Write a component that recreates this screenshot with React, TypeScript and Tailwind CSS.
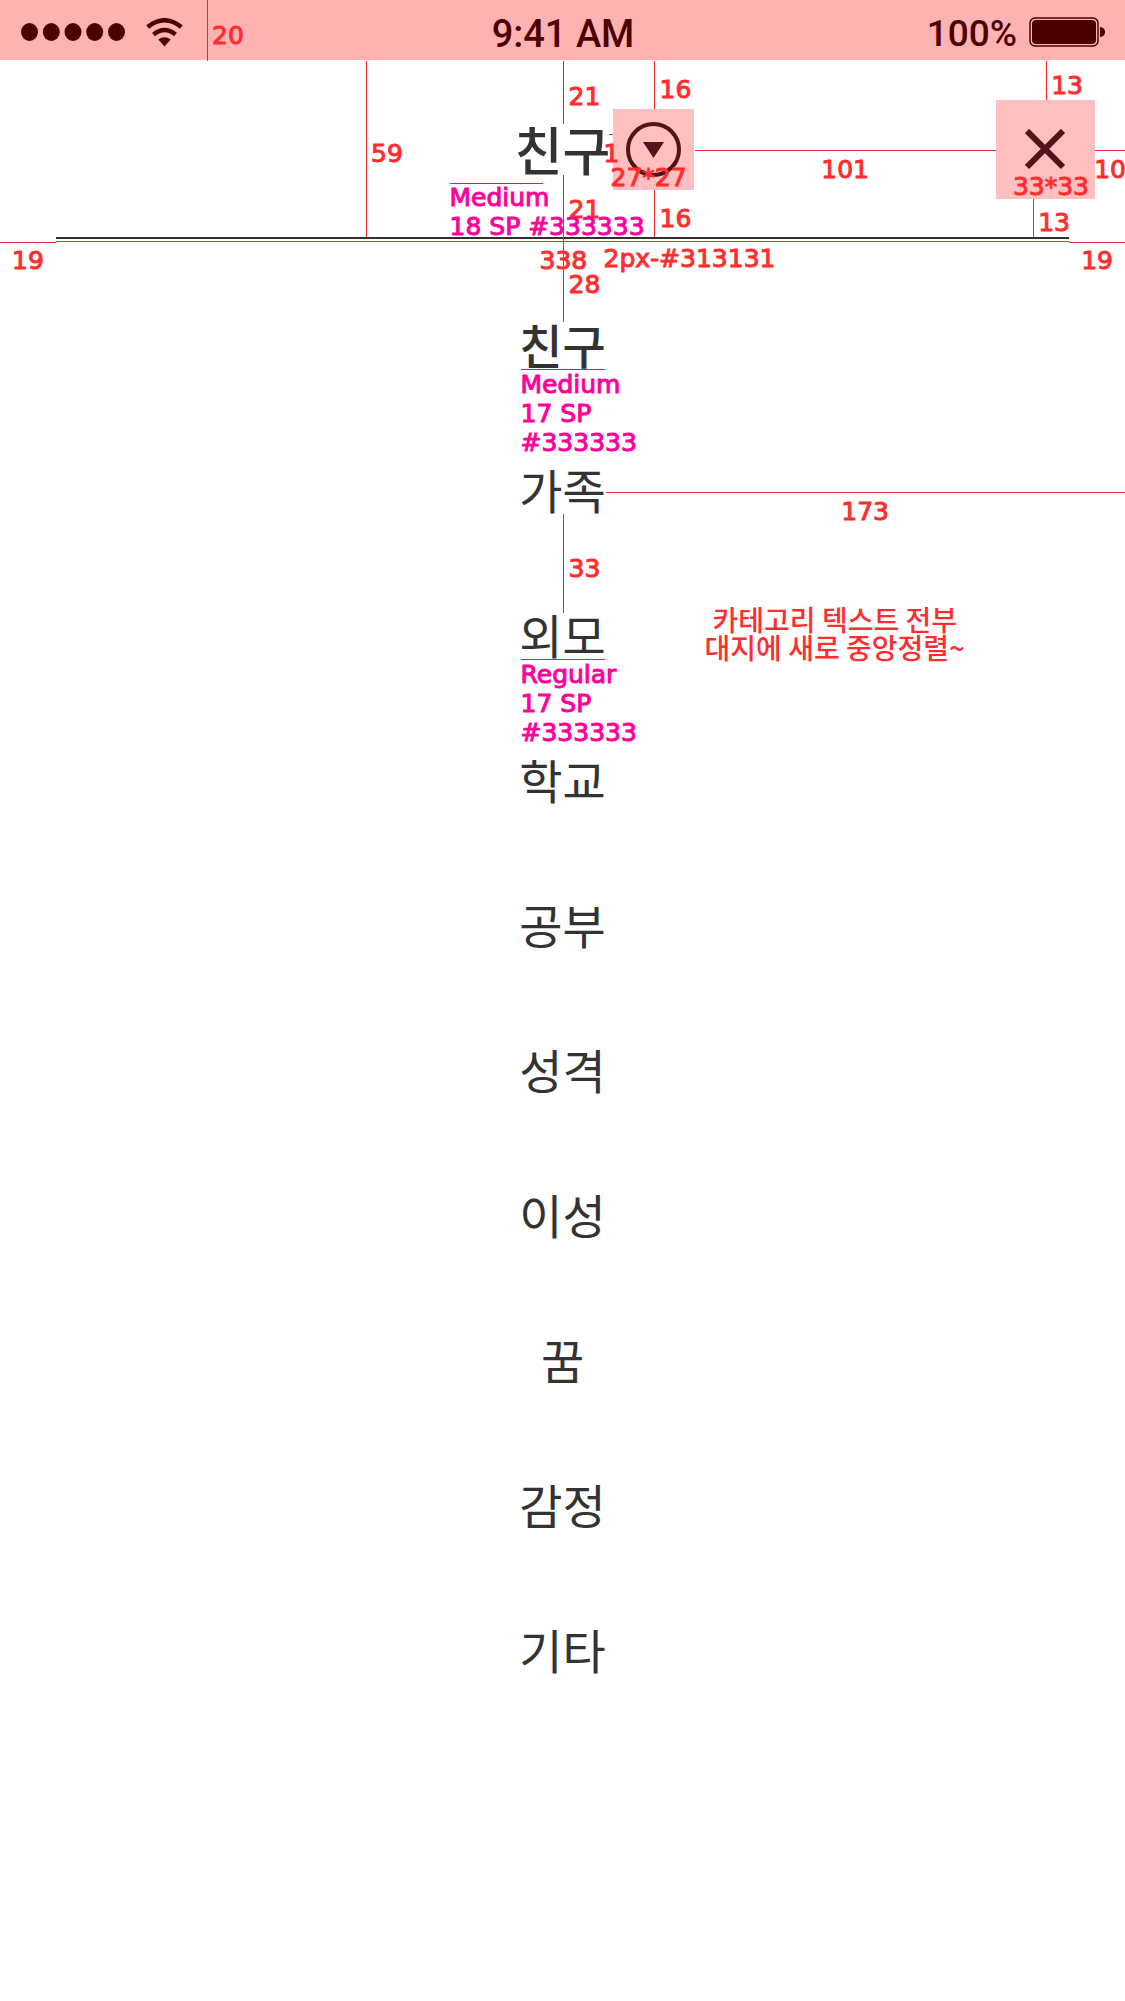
import type { ReactNode } from "react";

const RED = "text-[#ff2d2d]";
const PINK = "text-[#ff0099]";

type NoteProps = { at: string; tone?: string; children: ReactNode };

function Note({ at, tone = RED, children }: NoteProps) {
  return (
    <span
      className={`absolute whitespace-nowrap font-['DejaVu_Sans',sans-serif] text-[25px] leading-[29px] [-webkit-text-stroke:1px_currentColor] ${tone} ${at}`}
    >
      {children}
    </span>
  );
}

function Rule({ at, tone = "bg-[#f2282d]" }: { at: string; tone?: string }) {
  return <span aria-hidden="true" className={`absolute ${tone} ${at}`} />;
}

function StatusBar() {
  return (
    <div className="relative grid h-[60px] grid-cols-[1fr_auto_1fr] items-center bg-[#ffb2b2] pt-1 pr-5 pl-[21px] font-[Roboto,sans-serif] text-[38px] leading-[46px] font-medium text-[#4d0000]">
      <div className="flex items-center gap-5">
        <svg width="105" height="18" viewBox="0 0 105 18" aria-label="Signal strength" fill="currentColor">
          <ellipse cx="8.5" cy="9" rx="8.5" ry="9" />
          <ellipse cx="30.3" cy="9" rx="8.5" ry="9" />
          <ellipse cx="52" cy="9" rx="8.5" ry="9" />
          <ellipse cx="73.7" cy="9" rx="8.5" ry="9" />
          <ellipse cx="95.5" cy="9" rx="8.5" ry="9" />
        </svg>
        <svg width="37" height="29" viewBox="0 0 37 29" aria-label="Wi-Fi">
          <path d="M1.700 9 Q18.500 -4.500 35.300 9" fill="none" stroke="currentColor" strokeWidth="4.500" />
          <path d="M7.500 16.500 Q18.500 7.500 29.500 16.500" fill="none" stroke="currentColor" strokeWidth="4.500" />
          <path d="M18.500 28.500 L12.300 21.500 Q18.500 16.800 24.700 21.500 Z" fill="currentColor" />
        </svg>
      </div>
      <time className="pt-1">9:41 AM</time>
      <div className="flex items-center justify-end gap-3">
        <span className="pt-1 text-[37px]">100%</span>
        <svg width="76" height="30" viewBox="0 0 76 30" aria-label="Battery full">
          <rect x="1" y="1" width="68" height="28" rx="5" fill="none" stroke="currentColor" strokeWidth="1.5" />
          <rect x="3" y="3" width="64" height="24" rx="4" fill="currentColor" />
          <path d="M71 10 Q76 10.500 76 15 Q76 19.500 71 20 Z" fill="currentColor" />
        </svg>
      </div>
      <Rule at="left-[207px] top-0 h-[61px] w-px" />
      <Note at="left-[212px] top-[21px]">20</Note>
    </div>
  );
}

function Header() {
  return (
    <header className="relative">
      <div className="grid h-[177px] grid-cols-[1fr_auto_1fr] items-center pt-px">
        <span />
        <h1 className="text-[52px] leading-[72px] font-medium">친구</h1>
        <div className="flex items-center justify-between pr-[30px] pl-[3px]">
          <button
            type="button"
            aria-label="카테고리 열기"
            className="grid size-[81px] place-items-center bg-[#ffbfc0] text-[#531318]"
          >
            <svg width="55" height="55" viewBox="0 0 55 55">
              <circle cx="27.5" cy="27.5" r="25.500" fill="none" stroke="currentColor" strokeWidth="4" />
              <path d="M17 20 H38 L27.5 36 Z" fill="currentColor" />
            </svg>
          </button>
          <button
            type="button"
            aria-label="닫기"
            className="grid size-[99px] place-items-center bg-[#ffbfc0] text-[#531318]"
          >
            <svg width="41" height="41" viewBox="0 0 41 41">
              <path d="M2 2 L38 38 M38 2 L2 38" stroke="currentColor" strokeWidth="6" />
            </svg>
          </button>
        </div>
      </div>
      <hr className="mx-14 border-0 border-t-2 border-[#313131]" />

      <Rule at="left-14 right-14 top-[181px] h-px" />
      <Rule at="left-0 top-[182px] h-px w-14" />
      <Rule at="right-0 top-[182px] h-px w-14" />
      <Rule at="left-[366px] top-px h-[176px] w-px" />
      <Note at="left-[371px] top-[79px]">59</Note>
      <Note at="left-[12px] top-[186px]">19</Note>
      <Note at="right-[12px] top-[186px]">19</Note>

      <div className="absolute top-0 left-1/2">
        <Rule at="left-0 top-px h-[63px] w-px" />
        <Rule at="left-0 top-[115px] h-[147px] w-px" />
        <Note at="left-[6px] top-[22px]">21</Note>
        <Note at="left-[6px] top-[135px]">21</Note>
        <Note at="left-[6px] top-[210px]">28</Note>
        <Note at="-left-[23px] top-[186px]">338</Note>
        <Note at="left-[41px] top-[184px]">2px-#313131</Note>

        <Rule at="left-[91px] top-px h-[48px] w-px" />
        <Rule at="left-[91px] top-[130px] h-[47px] w-px" />
        <Rule at="left-[46px] top-[74px] h-px w-1" />
        <Note at="left-[97px] top-[15px]">16</Note>
        <Note at="left-[97px] top-[144px]">16</Note>
        <Note at="left-[41px] top-[79px]">1</Note>
        <Note at="left-[48px] top-[103px]">27*27</Note>

        <Rule at="-left-[113px] top-[123px] h-px w-[93px]" tone="bg-[#ff0099]" />
        <Note at="-left-[113px] top-[123px]" tone={PINK}>
          Medium
          <br />
          18 SP #333333
        </Note>
      </div>

      <Rule at="left-[calc(50%+132px)] right-[129px] top-[90px] h-px" />
      <Rule at="right-0 top-[90px] h-px w-[30px]" />
      <Note at="right-[256px] top-[95px]">101</Note>
      <Note at="-right-[1px] top-[95px]">10</Note>
      <Rule at="right-[78px] top-px h-[39px] w-px" />
      <Note at="right-[42px] top-[11px]">13</Note>
      <Note at="right-[36px] top-[112px]">33*33</Note>
      <Rule at="right-[91px] top-[139px] h-[38px] w-px" />
      <Note at="right-[55px] top-[148px]">13</Note>
    </header>
  );
}

function SpecNote({ weight }: { weight: string }) {
  return (
    <div className="absolute top-0 left-1/2">
      <Rule at="-left-[42px] top-[98px] h-px w-[84px]" tone="bg-[#ff0099]" />
      <Note at="-left-[42px] top-[99px]" tone={PINK}>
        {weight}
        <br />
        17 SP
        <br />
        #333333
      </Note>
    </div>
  );
}

const categories: { name: string; selected?: boolean; notes?: ReactNode }[] = [
  { name: "친구", selected: true, notes: <SpecNote weight="Medium" /> },
  {
    name: "가족",
    notes: (
      <>
        <Rule at="left-[calc(50%+43px)] right-0 top-[76px] h-px" />
        <Note at="right-[236px] top-[81px]">173</Note>
        <div className="absolute top-0 left-1/2">
          <Rule at="left-0 top-[98px] h-[99px] w-px" />
          <Note at="left-[6px] top-[138px]">33</Note>
        </div>
      </>
    ),
  },
  {
    name: "외모",
    notes: (
      <>
        <SpecNote weight="Regular" />
        <p className="absolute top-[44px] right-[160px] text-center text-[28px] leading-[28px] font-medium whitespace-nowrap text-[#ff2d2d]">
          카테고리 텍스트 전부
          <br />
          대지에 새로 중앙정렬~
        </p>
      </>
    ),
  },
  { name: "학교" },
  { name: "공부" },
  { name: "성격" },
  { name: "이성" },
  { name: "꿈" },
  { name: "감정" },
  { name: "기타" },
];

export default function App() {
  return (
    <main className="min-h-screen overflow-x-hidden bg-white font-['Noto_Sans_CJK_KR',sans-serif] text-[#333333]">
      <StatusBar />
      <Header />
      <ul className="pt-8">
        {categories.map(({ name, selected, notes }) => (
          <li key={name} className="relative flex h-[145px] items-center justify-center">
            <button
              type="button"
              className={`text-[47px] leading-[68px] ${selected ? "font-medium" : "font-normal"}`}
            >
              {name}
            </button>
            {notes}
          </li>
        ))}
      </ul>
    </main>
  );
}
